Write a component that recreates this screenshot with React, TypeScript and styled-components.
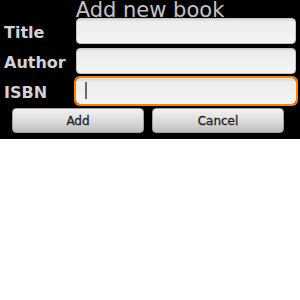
import React from 'react';
import styled, { createGlobalStyle } from 'styled-components';

const GlobalStyle = createGlobalStyle`
  html, body {
    margin: 0;
    padding: 0;
    background: #ffffff;
  }
`;

export default function App() {
  return (
    <>
      <GlobalStyle />
      <Dialog>
        <Heading>Add new book</Heading>
        <Form>
          <Label>Title</Label>
          <Field />
          <Label>Author</Label>
          <Field />
          <Label>ISBN</Label>
          <Field focused>
            <Caret />
          </Field>
        </Form>
        <Buttons>
          <Button>Add</Button>
          <Button>Cancel</Button>
        </Buttons>
      </Dialog>
    </>
  );
}

const Dialog = styled.div`
  background: #000;
  height: 139px;
  width: 300px;
  display: flex;
  flex-direction: column;
  font-family: 'DejaVu Sans', 'Liberation Sans', sans-serif;
  overflow: hidden;
`;

const Heading = styled.div`
  height: 18px;
  line-height: 20px;
  font-size: 21px;
  color: #c4c4c4;
  text-align: center;
  padding-left: 0px;
`;

const Form = styled.div`
  display: grid;
  grid-template-columns: 72px 220px;
  grid-auto-rows: 26px;
  row-gap: 4px;
  padding-left: 4px;
`;

const Label = styled.div`
  display: flex;
  align-items: center;
  padding-top: 2px;
  font-size: 16px;
  font-weight: bold;
  color: #d2d2d2;
`;

const Field = styled.div<{ focused?: boolean }>`
  position: relative;
  border-radius: 4px;
  background: linear-gradient(#d8d8d8 0px, #ededed 3px, #f4f4f4 100%);
  border: 1px solid ${(p) => (p.focused ? '#fff3e0' : '#c4c4c4')};
  box-sizing: border-box;
  box-shadow: ${(p) => (p.focused ? '0 0 0 2px #ff8000' : 'none')};
`;

const Caret = styled.div`
  position: absolute;
  left: 8px;
  top: 3px;
  width: 2px;
  height: 17px;
  background: #6a6a6a;
`;

const Buttons = styled.div`
  display: flex;
  gap: 8px;
  padding: 4px 0 0 12px;
`;

const Button = styled.div`
  width: 132px;
  height: 25px;
  box-sizing: border-box;
  border-radius: 4px;
  border: 1px solid #a0a0a0;
  background: linear-gradient(#f2f2f2, #e0e0e0 45%, #bdbdbd);
  display: flex;
  align-items: center;
  justify-content: center;
  font-size: 12px;
  color: #1e1e1e;
  -webkit-text-stroke: 0.3px #1e1e1e;
`;
